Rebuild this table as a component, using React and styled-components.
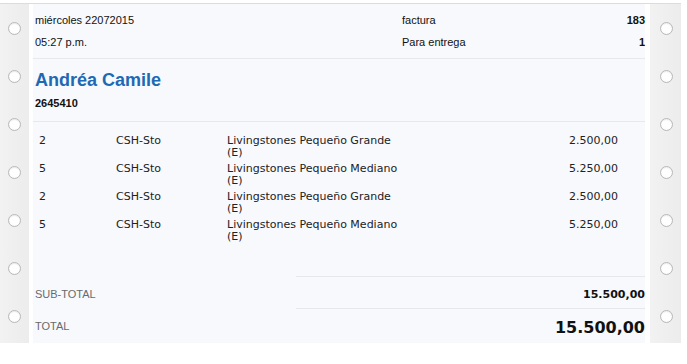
import React from "react";
import styled, { createGlobalStyle } from "styled-components";

const items = [
  { qty: 2, code: "CSH-Sto", desc: "Livingstones Pequeño Grande (E)", amount: "2.500,00" },
  { qty: 5, code: "CSH-Sto", desc: "Livingstones Pequeño Mediano (E)", amount: "5.250,00" },
  { qty: 2, code: "CSH-Sto", desc: "Livingstones Pequeño Grande (E)", amount: "2.500,00" },
  { qty: 5, code: "CSH-Sto", desc: "Livingstones Pequeño Mediano (E)", amount: "5.250,00" },
];

const holes = [0, 1, 2, 3, 4, 5, 6];

export default function App() {
  return (
    <>
      <GlobalStyle />
      <StyledPaper>
        <StyledStrip side="left">
          {holes.map((h) => <StyledHole key={h} />)}
        </StyledStrip>
        <StyledSheet>
          <StyledHeader>
            <StyledMeta>
              <span>miércoles 22072015</span>
              <span>05:27 p.m.</span>
            </StyledMeta>
            <StyledMeta>
              <StyledPair><span>factura</span><b>183</b></StyledPair>
              <StyledPair><span>Para entrega</span><b>1</b></StyledPair>
            </StyledMeta>
          </StyledHeader>
          <StyledCustomer>
            <StyledName>Andréa Camile</StyledName>
            <StyledCustomerId>2645410</StyledCustomerId>
          </StyledCustomer>
          <StyledItems>
            {items.map((it, i) => (
              <StyledItem key={i}>
                <span>{it.qty}</span>
                <span>{it.code}</span>
                <StyledDesc>{it.desc}</StyledDesc>
                <StyledAmount>{it.amount}</StyledAmount>
              </StyledItem>
            ))}
          </StyledItems>
          <StyledTotalRow>
            <StyledTotalLabel>SUB-TOTAL</StyledTotalLabel>
            <StyledTotalValue>15.500,00</StyledTotalValue>
          </StyledTotalRow>
          <StyledTotalRow>
            <StyledTotalLabel>TOTAL</StyledTotalLabel>
            <StyledTotalValue big>15.500,00</StyledTotalValue>
          </StyledTotalRow>
        </StyledSheet>
        <StyledStrip side="right">
          {holes.map((h) => <StyledHole key={h} />)}
        </StyledStrip>
      </StyledPaper>
    </>
  );
}

const GlobalStyle = createGlobalStyle`
  body {
    margin: 0;
    background: #ffffff;
    font-family: "Liberation Sans", Arial, sans-serif;
    color: #111;
  }
`

const StyledPaper = styled.div`
  width: 681px;
  height: 339px;
  margin-top: 3px;
  border-top: 1px solid #dcdcdc;
  display: flex;
`

const StyledStrip = styled.div`
  width: ${(p) => (p.side === "left" ? "29px" : "31px")};
  background: linear-gradient(to right, #f2f2f2, #ececec);
  display: flex;
  flex-direction: column;
  align-items: center;
  gap: 35px;
  padding-top: 18px;
  box-sizing: border-box;
  margin-left: ${(p) => (p.side === "right" ? "5px" : "0")};
  padding-left: ${(p) => (p.side === "right" ? "1px" : "0")};
`

const StyledHole = styled.div`
  width: 11px;
  height: 11px;
  border-radius: 50%;
  border: 1px solid #b9b9b9;
  background: radial-gradient(circle at 50% 40%, #ffffff 55%, #f0f0f0);
  box-shadow: inset 0 1px 1px rgba(0, 0, 0, 0.08);
  flex-shrink: 0;
`

const StyledSheet = styled.div`
  flex: 1;
  margin-left: 4px;
  background: #f7f9fd;
  display: flex;
  flex-direction: column;
`

const StyledHeader = styled.div`
  display: grid;
  grid-template-columns: 367px 1fr;
  padding: 5px 0 0 2px;
  height: 55px;
  box-sizing: border-box;
  border-bottom: 1px solid #e6e8ec;
  font-size: 11px;
`

const StyledMeta = styled.div`
  display: flex;
  flex-direction: column;
  line-height: 22px;
`

const StyledPair = styled.div`
  display: flex;
  justify-content: space-between;
  b { font-weight: bold; }
`

const StyledCustomer = styled.div`
  height: 63px;
  box-sizing: border-box;
  padding: 10px 0 0 2px;
  border-bottom: 1px solid #e6e8ec;
`

const StyledName = styled.div`
  font-size: 18px;
  font-weight: bold;
  color: #1f68b3;
  line-height: 22px;
`

const StyledCustomerId = styled.div`
  font-size: 11px;
  font-weight: bold;
  line-height: 13px;
  margin-top: 6px;
`

const StyledItems = styled.div`
  display: flex;
  flex-direction: column;
  gap: 4px;
  padding: 13px 0 0 6px;
  height: 154px;
  box-sizing: border-box;
  font-family: "DejaVu Sans", Verdana, sans-serif;
  font-size: 11px;
  color: #222;
`

const StyledItem = styled.div`
  display: grid;
  grid-template-columns: 77px 111px 190px 1fr;
  line-height: 12px;
  padding-right: 27px;
`

const StyledDesc = styled.span`
  width: 180px;
`

const StyledAmount = styled.span`
  text-align: right;
`

const StyledTotalRow = styled.div`
  display: grid;
  grid-template-columns: 263px 1fr;
  height: 32px;
  &:last-child { height: 34px; }
`

const StyledTotalLabel = styled.div`
  font-size: 11px;
  color: #6a6a6a;
  padding: 12px 0 0 2px;
`

const StyledTotalValue = styled.div`
  border-top: 1px solid #e6e8ec;
  text-align: right;
  font-family: "DejaVu Sans", Verdana, sans-serif;
  font-weight: bold;
  font-size: ${(p) => (p.big ? "16px" : "11px")};
  padding-top: ${(p) => (p.big ? "9px" : "11px")};
  color: #111;
`
